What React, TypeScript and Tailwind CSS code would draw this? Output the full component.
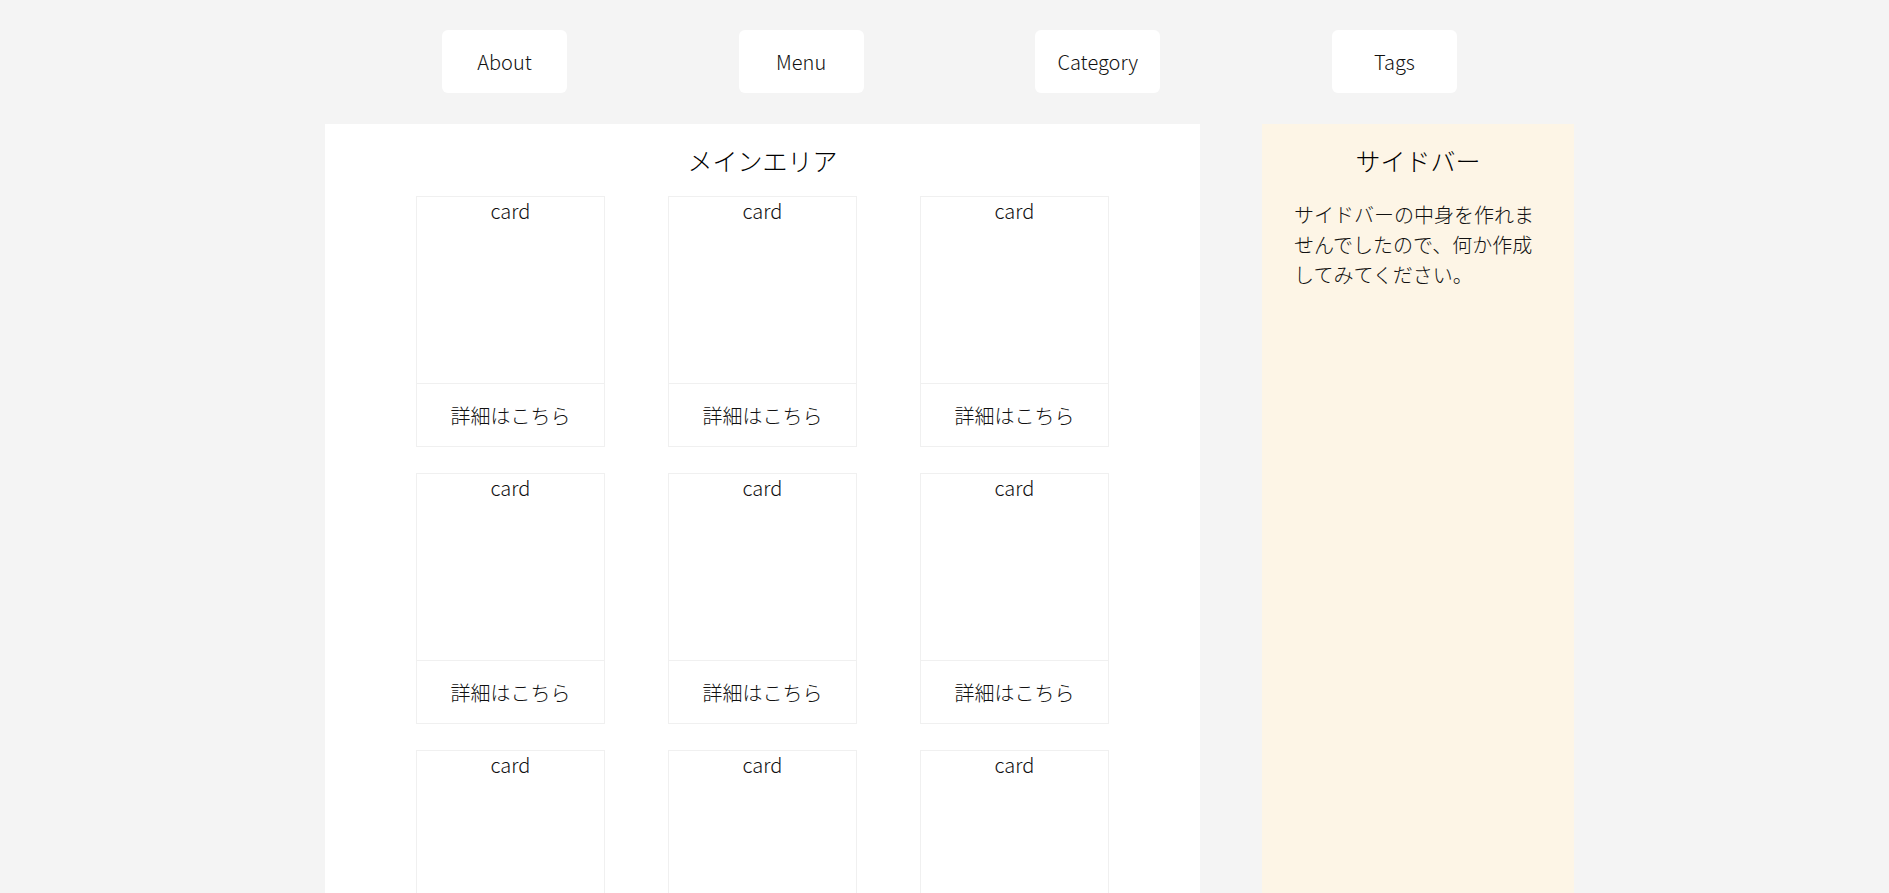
const navItems = ["About", "Menu", "Category", "Tags"];
const cards = Array.from({ length: 9 }, (_, i) => i);

function Card() {
  return (
    <div className="flex h-[251px] flex-col border border-[#f0f0f0]">
      <div className="h-[186px] text-center leading-[28px]">card</div>
      <div className="flex flex-1 items-center justify-center border-t border-[#f0f0f0] pt-[2px]">
        詳細はこちら
      </div>
    </div>
  );
}

export default function App() {
  return (
    <div
      className="min-h-screen bg-[#f4f4f4] text-[20px] font-light leading-normal text-[#111]"
      style={{ fontFamily: '"Noto Sans CJK JP", "Noto Sans", sans-serif' }}
    >
      <div className="ml-[325px] w-[1249px]">
        <nav className="mx-auto flex w-[95%] justify-around pt-[30px] pb-[31px]">
          {navItems.map((item) => (
            <a
              key={item}
              href="#"
              className="flex h-[63px] w-[125px] items-center justify-center rounded-md bg-white"
            >
              {item}
            </a>
          ))}
        </nav>

        <div className="flex justify-between">
          <main className="w-[875px] bg-white pb-10">
            <h1 className="pt-[18px] pb-[16px] text-center text-[25px] text-black">メインエリア</h1>
            <div className="mx-auto grid w-[693px] grid-cols-[189px_189px_189px] gap-x-[63px] gap-y-[26px]">
              {cards.map((c) => (
                <Card key={c} />
              ))}
            </div>
          </main>

          <aside className="w-[312px] bg-[#fdf5e6] px-8">
            <h2 className="pt-[18px] pb-[20px] text-center text-[25px] text-black">サイドバー</h2>
            <p>サイドバーの中身を作れませんでしたので、何か作成してみてください。</p>
          </aside>
        </div>
      </div>
    </div>
  );
}
